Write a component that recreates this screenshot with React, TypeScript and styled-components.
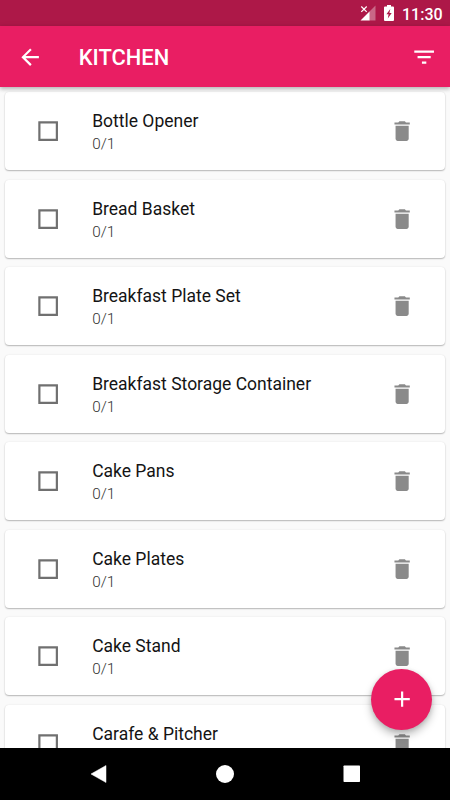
import React from "react";
import styled, { createGlobalStyle } from "styled-components";

const Global = createGlobalStyle`
  * { box-sizing: border-box; }
  body { margin: 0; background: #fafafa; }
`;

const Screen = styled.div`
  position: relative;
  display: flex;
  flex-direction: column;
  width: 450px;
  height: 800px;
  overflow: hidden;
  background: #fafafa;
  font-family: Roboto, sans-serif;
`;

const StatusBar = styled.div`
  display: flex;
  flex: none;
  align-items: center;
  justify-content: flex-end;
  height: 26px;
  padding-right: 9px;
  background: #ad1848;
  color: #fff;
`;

const SignalIcon = styled.svg`
  width: 16px;
  height: 16px;
  margin-right: 8px;
`;

const BatteryIcon = styled.svg`
  width: 10px;
  height: 16px;
  margin-right: 8px;
`;

const Clock = styled.span`
  width: 39px;
  font-size: 16px;
  line-height: 26px;
  font-weight: 500;
  padding-top: 3px;
  white-space: nowrap;
`;

const AppBar = styled.header`
  position: relative;
  z-index: 1;
  display: flex;
  flex: none;
  align-items: center;
  height: 61.25px;
  padding: 0 13px 0 17.3px;
  background: #e91e63;
  color: #fff;
  box-shadow: 0 2px 4px rgba(0, 0, 0, 0.22), 0 1px 6px rgba(0, 0, 0, 0.1);
`;

const Icon = styled.svg`
  display: block;
  flex: none;
  width: 26.25px;
  height: 26.25px;
  fill: currentColor;
`;

const Title = styled.h1`
  flex: 1;
  margin: 0 0 0 35.2px;
  padding-top: 2px;
  font-size: 21.9px;
  line-height: 30px;
  font-weight: 500;
`;

const List = styled.main`
  display: flex;
  flex: 1;
  flex-direction: column;
  gap: 9.25px;
  min-height: 0;
  padding: 4.75px 4.6px 0 4.8px;
  overflow: hidden;
`;

const Card = styled.div`
  display: flex;
  flex: none;
  align-items: center;
  height: 78.25px;
  padding: 0 30.5px 0 30.1px;
  background: #fff;
  border-radius: 4px;
  box-shadow: 0 1px 1.5px rgba(0, 0, 0, 0.26), 0 0 2px rgba(0, 0, 0, 0.08);
`;

const CheckIcon = styled(Icon)`
  color: #707070;
`;

const DeleteIcon = styled(Icon)`
  color: #8a8a8a;
`;

const Labels = styled.div`
  flex: 1;
  padding: 2px 0 0 31px;
`;

const Name = styled.div`
  font-size: 17.5px;
  line-height: 24px;
  color: #141414;
`;

const Count = styled.div`
  font-size: 15.3px;
  line-height: 22px;
  font-weight: 300;
  color: #333;
`;

const AddButton = styled.button`
  position: absolute;
  right: 17.7px;
  bottom: 70px;
  z-index: 2;
  display: flex;
  align-items: center;
  justify-content: center;
  width: 61.25px;
  height: 61.25px;
  padding: 0;
  border: 0;
  border-radius: 50%;
  background: #e91e63;
  color: #fff;
  box-shadow: 0 5px 9px rgba(0, 0, 0, 0.26), 0 1px 4px rgba(0, 0, 0, 0.12);
`;

const NavBar = styled.nav`
  position: relative;
  z-index: 3;
  display: flex;
  flex: none;
  align-items: center;
  justify-content: space-between;
  height: 52.25px;
  padding: 0 89.5px;
  background: #000;
`;

const NavIcon = styled.svg`
  width: 18px;
  height: 18px;
  fill: #fff;
`;

const items = [
  "Bottle Opener",
  "Bread Basket",
  "Breakfast Plate Set",
  "Breakfast Storage Container",
  "Cake Pans",
  "Cake Plates",
  "Cake Stand",
  "Carafe & Pitcher",
];

export default function App() {
  return (
    <>
      <Global />
      <Screen>
        <StatusBar>
          <SignalIcon viewBox="0 0 16 16">
            <path d="M15.500 0.500V15.500H9V7z" fill="#fff" opacity="0.35" />
            <path d="M9.500 6.500v9H0.500z" fill="#fff" />
            <path d="M1.300 1.500l5.400 5.400M6.700 1.500L1.300 6.900" stroke="#fff" strokeWidth="1.2" />
          </SignalIcon>
          <BatteryIcon viewBox="0 0 10 16">
            <path
              d="M3 0h4v1.500h2q1 0 1 1V15q0 1-1 1H1q-1 0-1-1V2.500q0-1 1-1h2zM6.300 4L2.400 9.300h2.200L3.800 13.500 7.700 8H5.400z"
              fill="#fff"
              fillRule="evenodd"
            />
          </BatteryIcon>
          <Clock>11:30</Clock>
        </StatusBar>
        <AppBar>
          <Icon viewBox="0 0 24 24">
            <path d="M20 11H7.830l5.590-5.590L12 4l-8 8 8 8 1.410-1.410L7.830 13H20v-2z" />
          </Icon>
          <Title>KITCHEN</Title>
          <Icon viewBox="0 0 24 24">
            <path d="M10 18h4v-2h-4v2zM3 6v2h18V6H3zm3 7h12v-2H6v2z" />
          </Icon>
        </AppBar>
        <List>
          {items.map((name) => (
            <Card key={name}>
              <CheckIcon viewBox="0 0 24 24">
                <path d="M3.200 3h17.600q.2 0 .2.200v17.600q0 .2-.2.200H3.200q-.2 0-.2-.2V3.200q0-.2.200-.2zM5 5v14h14V5z" fillRule="evenodd" />
              </CheckIcon>
              <Labels>
                <Name>{name}</Name>
                <Count>0/1</Count>
              </Labels>
              <DeleteIcon viewBox="0 0 24 24">
                <path d="M6 19c0 1.100.9 2 2 2h8c1.100 0 2-.9 2-2V7H6v12zM19 4h-3.500l-1-1h-5l-1 1H5v2h14V4z" />
              </DeleteIcon>
            </Card>
          ))}
        </List>
        <AddButton aria-label="Add item">
          <Icon viewBox="0 0 24 24">
            <path d="M19 13h-6v6h-2v-6H5v-2h6V5h2v6h6v2z" />
          </Icon>
        </AddButton>
        <NavBar>
          <NavIcon viewBox="0 0 18 18">
            <path d="M16 0.500v17L1 9z" stroke="#fff" strokeWidth="0.5" strokeLinejoin="round" />
          </NavIcon>
          <NavIcon viewBox="0 0 18 18">
            <circle cx="9" cy="9" r="9" />
          </NavIcon>
          <NavIcon viewBox="0 0 18 18">
            <rect x="0.5" y="0.500" width="16.500" height="16.500" rx="0.700" />
          </NavIcon>
        </NavBar>
      </Screen>
    </>
  );
}
